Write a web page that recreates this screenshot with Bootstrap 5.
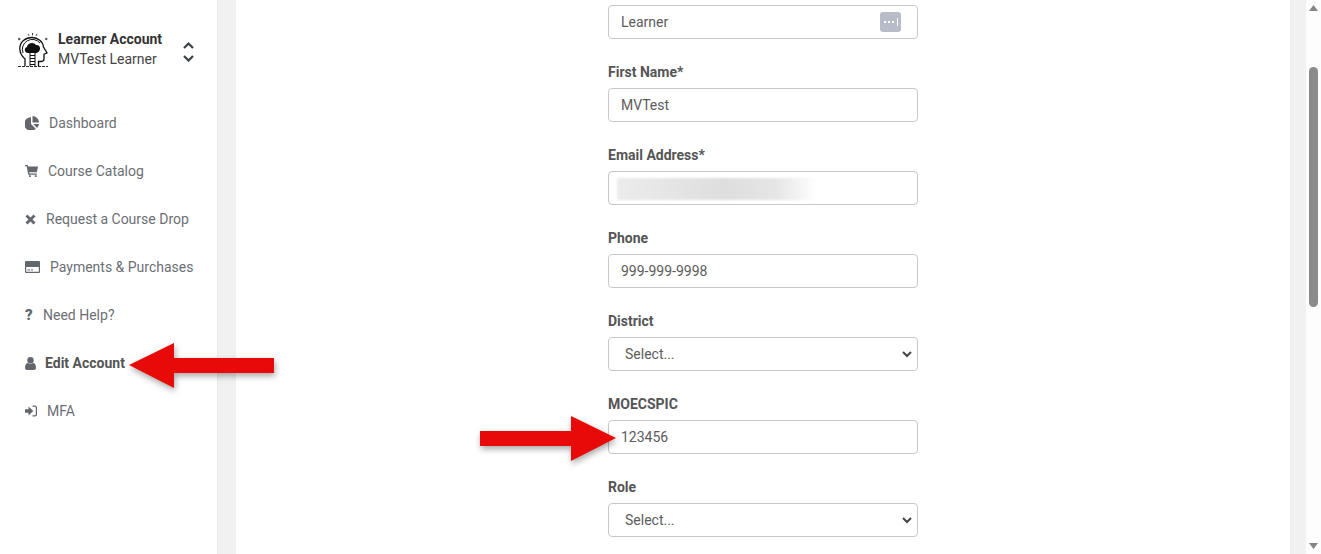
<!DOCTYPE html>
<html lang="en">
  <head>
    <meta charset="UTF-8" />
    <meta name="viewport" content="width=device-width, initial-scale=1.0" />
    <title>Edit Account</title>
    <link rel="stylesheet" href="https://cdn.jsdelivr.net/npm/bootstrap@5.3.2/dist/css/bootstrap.min.css" />
    <style>
      html, body { height: 100%; overflow: hidden; }
      body { font-family: Roboto, "Liberation Sans", sans-serif; font-size: 14px; background: #f1f1f2; color: #555; }

      .app-shell { height: 554px; }

      /* sidebar */
      .side-panel { width: 218px; background: #fff; border-right: 1px solid #e8eaee; flex-shrink: 0; }
      .acct-box { padding: 29px 0 0 18px; height: 88px; }
      .acct-logo { width: 30px; height: 34px; margin-top: 4px; }
      .acct-text { margin-left: 10px; line-height: 20px; color: #444; margin-top: 0; }
      .acct-text strong { color: #333; font-weight: 700; display: block; }
      .acct-flip { width: 11px; height: 21px; margin-left: 21px; margin-top: 12px; }
      .side-links { padding-top: 11px; }
      .side-link { height: 48px; padding-left: 25px; color: #6b6f75; text-decoration: none; }
      .side-link svg { fill: #63666c; display: block; }
      .side-link.is-on { color: #555; font-weight: 700; }
      .glyph-q { font-weight: 900; color: #63666c; font-size: 15px; width: 8px; line-height: 1; }

      /* main area */
      .gutter-l { width: 18px; flex-shrink: 0; }
      .main-pane { flex: 1; background: #fff; border-right: 1px solid #eaecef; padding-top: 5px; }
      .form-col { width: 310px; margin: 0 auto; }
      .field-row { margin-bottom: 22px; }
      .field-row label { display: block; font-weight: 700; line-height: 21px; padding-top: 1px; margin-bottom: 5px; color: #555; }
      .form-control, .form-select { height: 34px; font-size: 14px; color: #5c5c5c; border-color: #c6c8ca; border-radius: 4px; padding: 0 12px; font-family: inherit; }
      .form-select {
        padding-left: 16px;
        background-image: url("data:image/svg+xml,%3csvg xmlns='http://www.w3.org/2000/svg' viewBox='0 0 10 7'%3e%3cpath fill='none' stroke='%23444' stroke-width='2' d='M1 1l4 4 4-4'/%3e%3c/svg%3e");
        background-position: right 5px center;
        background-size: 10px 7px;
      }
      .pass-btn { top: 7px; right: 17px; width: 21px; height: 20px; background: #b7bcc8; border-radius: 3px; }
      .pass-btn svg { display: block; }
      .blur-mail { left: 9px; top: 7px; width: 200px; height: 22px; background: linear-gradient(90deg, #ececec, #dedede 55%, #e6e6e6 80%, #fff); filter: blur(1px); }

      /* scrollbar */
      .gutter-r { width: 15px; flex-shrink: 0; }
      .fake-scroll { width: 15px; background: #fdfdfd; flex-shrink: 0; padding: 5px 3px; }
      .scroll-tip { width: 9px; height: 6px; background: #858585; flex-shrink: 0; }
      .tip-up { clip-path: polygon(50% 0, 100% 100%, 0 100%); }
      .tip-down { clip-path: polygon(0 0, 100% 0, 50% 100%); margin-top: auto; }
      .scroll-thumb { width: 9px; height: 240px; margin-top: 56px; background: #8b8b8b; border-radius: 5px; }

      .note-arrow { position: absolute; filter: drop-shadow(1px 3px 3px rgba(0, 0, 0, .35)); }
    </style>
  </head>
  <body>
    <div class="app-shell d-flex position-relative">
      <div class="side-panel">
        <div class="acct-box d-flex align-items-start">
          <svg class="acct-logo" viewBox="0 0 30 34">
            <path d="M7 33v-7C3.500 23 1.800 19.500 1.800 15.500 1.800 9 7.500 4.500 14 4.500c6 0 11 4 11.500 9.500l3.500 6-3 1.200V26c0 2-1.500 2.500-3 2.500h-2.500V33" fill="none" stroke="#111" stroke-width="1.300"/>
            <path d="M5 20a10 10 0 0 1 17-10" fill="none" stroke="#111" stroke-width="1"/>
            <path d="M10 20c-3.500 0-4.500-5-1-6 .5-4.500 7-5.500 9-2 3.500-.5 5 3 3.500 5.500-.5 1.500-2 2.500-3.500 2.500z" fill="#111"/>
            <path d="M12 20v13M17 20v13M12 22.500h5M12 25.500h5M12 28.500h5M12 31.500h5" fill="none" stroke="#111" stroke-width="1"/>
            <path d="M14.500 0v2.500M10 .8l1 2M19 .8l-1 2M0 6h2.500M1.200 4.800v2.400M27 6h2.500M28.200 4.800v2.400" stroke="#111" stroke-width=".8" fill="none"/>
            <path d="M0 33.500h30" stroke="#111" stroke-width=".9" stroke-dasharray="3 1"/>
          </svg>
          <div class="acct-text"><strong>Learner Account</strong>MVTest Learner</div>
          <svg class="acct-flip" viewBox="0 0 11 21"><path d="M1 7l4.500-4.500L10 7M1 15l4.500 4.500L10 15" fill="none" stroke="#3c4148" stroke-width="2.200"/></svg>
        </div>
        <nav class="side-links d-flex flex-column">
          <a class="side-link d-flex align-items-center" href="#">
            <svg width="14" height="14" viewBox="0 0 14 14" class="me-2 flex-shrink-0"><path d="M6 1.200v6.800l4.800 4.800A6.800 6.800 0 1 1 6 1.200zM7.500 0a6.500 6.500 0 0 1 6.500 6.500H7.500zM8.200 8H14a6.800 6.800 0 0 1-1.900 3.900z"/></svg>
            <span style="margin-left:2px">Dashboard</span></a>
          <a class="side-link d-flex align-items-center" href="#">
            <svg width="13" height="12" viewBox="0 0 13 12" class="flex-shrink-0"><path d="M0 0h2.800l.4 1.500H13l-1.100 5.700H4.200l.3 1.200h7.300v1.300H3.200L1.700 1.300H0zM4 10.200h1.800V12H4zM9.800 10.200h1.800V12H9.800z"/></svg>
            <span style="margin-left:10px">Course Catalog</span></a>
          <a class="side-link d-flex align-items-center" href="#">
            <svg width="11" height="11" viewBox="0 0 11 11" class="flex-shrink-0"><path d="M2.500.5l3 3 3-3 2 2-3 3 3 3-2 2-3-3-3 3-2-2 3-3-3-3z"/></svg>
            <span style="margin-left:10px">Request a Course Drop</span></a>
          <a class="side-link d-flex align-items-center" href="#">
            <svg width="15" height="12" viewBox="0 0 15 12" class="flex-shrink-0"><path fill-rule="evenodd" d="M1 0h13a1 1 0 0 1 1 1v10a1 1 0 0 1-1 1H1a1 1 0 0 1-1-1V1a1 1 0 0 1 1-1zM1.200 6v4.800h12.600V6zM2.500 8.500h2.500v1H2.500zM6 8.500h2v1H6z"/></svg>
            <span style="margin-left:10px">Payments &amp; Purchases</span></a>
          <a class="side-link d-flex align-items-center" href="#">
            <span class="glyph-q">?</span>
            <span style="margin-left:10px">Need Help?</span></a>
          <a class="side-link is-on d-flex align-items-center" href="#">
            <svg width="11" height="13" viewBox="0 0 11 13" class="flex-shrink-0"><circle cx="5.500" cy="3.200" r="3.200"/><path d="M0 11c0-3 1-5 3-5 1 1 4 1 5 0 2 0 3 2 3 5 0 1-1 2-2 2H2c-1 0-2-1-2-2z"/></svg>
            <span style="margin-left:9px">Edit Account</span></a>
          <a class="side-link d-flex align-items-center" href="#">
            <svg width="12" height="12" viewBox="0 0 12 12" class="flex-shrink-0"><path d="M0 4.200h3.500V1.500L8.300 6 3.500 10.500V7.800H0zM7.500 .5H10c1 0 2 1 2 2v7c0 1-1 2-2 2H7.500v-1.200H10l.8-.8V2.500l-.8-.8H7.500z"/></svg>
            <span style="margin-left:10px">MFA</span></a>
        </nav>
      </div>

      <div class="gutter-l"></div>

      <div class="main-pane">
        <form class="form-col">
          <div class="field-row position-relative">
            <input class="form-control" type="text" value="Learner" />
            <span class="pass-btn position-absolute">
              <svg width="21" height="20" viewBox="0 0 21 20"><path d="M4 9h2v2H4zM8 9h2v2H8zM12 9h2v2h-2z" fill="#fff"/><path d="M17 6h1v8h-1z" fill="#fff"/></svg>
            </span>
          </div>
          <div class="field-row">
            <label for="fn">First Name*</label>
            <input class="form-control" id="fn" type="text" value="MVTest" />
          </div>
          <div class="field-row">
            <label for="em">Email Address*</label>
            <div class="position-relative">
              <input class="form-control" id="em" type="text" />
              <div class="blur-mail position-absolute"></div>
            </div>
          </div>
          <div class="field-row">
            <label for="ph">Phone</label>
            <input class="form-control" id="ph" type="text" value="999-999-9998" />
          </div>
          <div class="field-row">
            <label for="di">District</label>
            <select class="form-select" id="di"><option>Select...</option></select>
          </div>
          <div class="field-row">
            <label for="mo">MOECSPIC</label>
            <input class="form-control" id="mo" type="text" value="123456" />
          </div>
          <div class="field-row">
            <label for="ro">Role</label>
            <select class="form-select" id="ro"><option>Select...</option></select>
          </div>
        </form>
      </div>

      <div class="gutter-r"></div>
      <div class="fake-scroll d-flex flex-column">
        <div class="scroll-tip tip-up"></div>
        <div class="scroll-thumb"></div>
        <div class="scroll-tip tip-down"></div>
      </div>

      <!-- annotation arrows -->
      <svg class="note-arrow" style="left:129px;top:343px" width="145" height="45" viewBox="0 0 145 45"><path d="M0 22L45 0v15h100v15H45v15z" fill="#e80909"/></svg>
      <svg class="note-arrow" style="left:480px;top:416px" width="136" height="45" viewBox="0 0 136 45"><path d="M136 22L91 0v15H0v15h91v15z" fill="#e80909"/></svg>
    </div>
    <script src="https://cdn.jsdelivr.net/npm/bootstrap@5.3.2/dist/js/bootstrap.bundle.min.js"></script>
  </body>
</html>
